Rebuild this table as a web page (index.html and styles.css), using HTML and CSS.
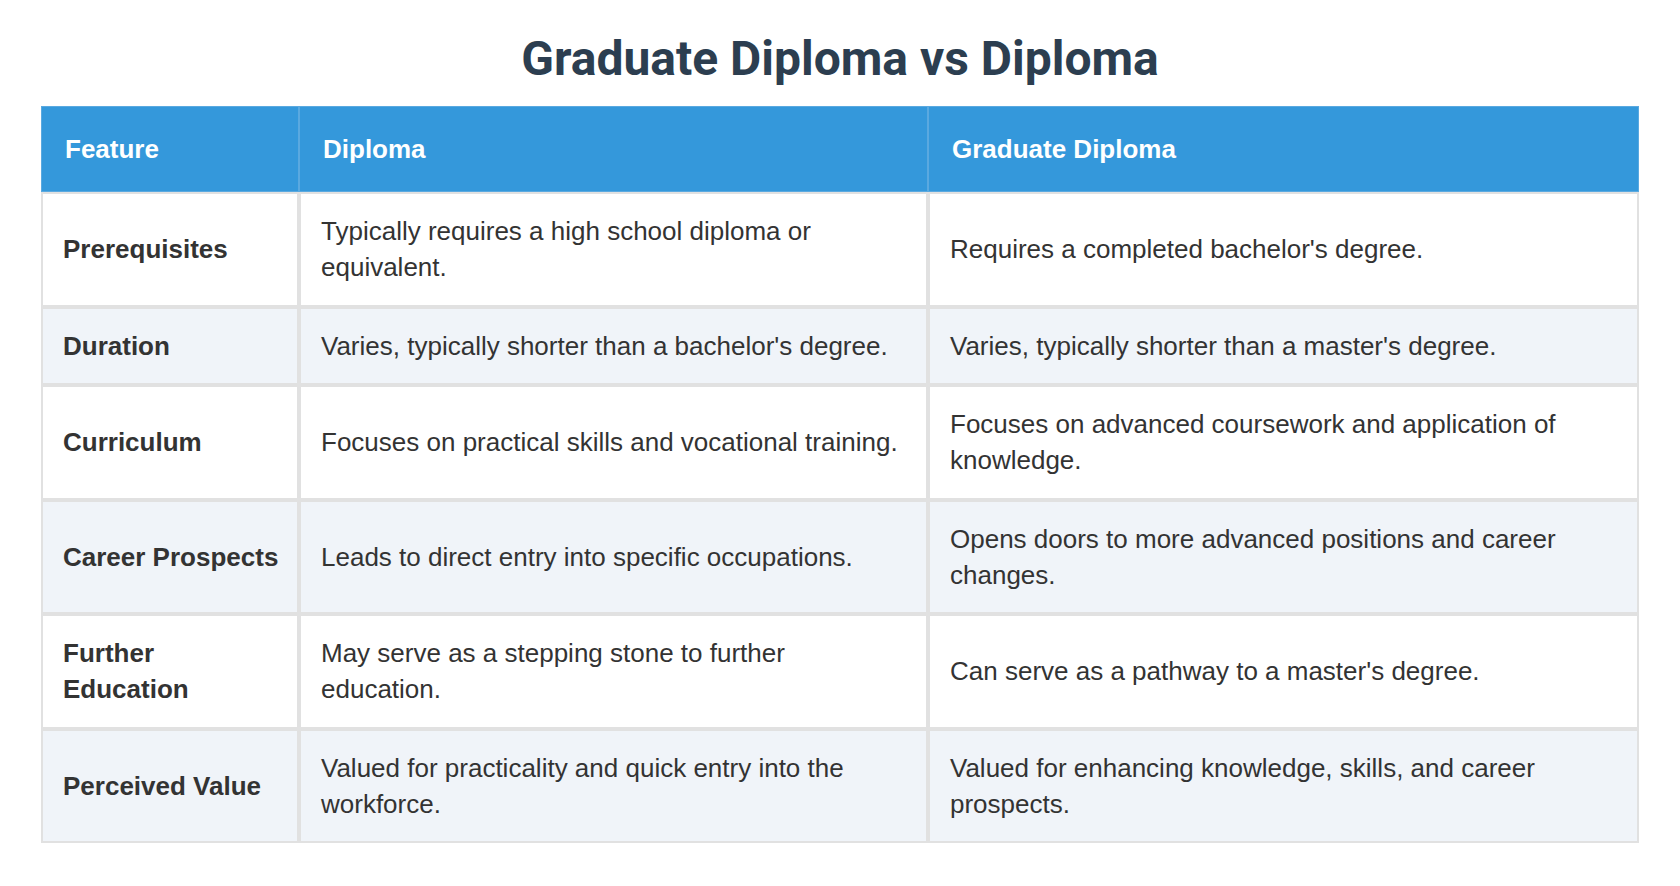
FILE: index.html
```html
<!DOCTYPE html>
<html lang="en">
<head>
<meta charset="utf-8">
<title>Graduate Diploma vs Diploma</title>
<link rel="stylesheet" href="styles.css">
</head>
<body>
<main class="page">
  <h1 class="title">Graduate Diploma vs Diploma</h1>
  <table class="compare">
    <colgroup>
      <col class="c1">
      <col class="c2">
      <col class="c3">
    </colgroup>
    <thead>
      <tr>
        <th>Feature</th>
        <th>Diploma</th>
        <th>Graduate Diploma</th>
      </tr>
    </thead>
    <tbody>
      <tr>
        <td class="feat">Prerequisites</td>
        <td>Typically requires a high school diploma or equivalent.</td>
        <td>Requires a completed bachelor's degree.</td>
      </tr>
      <tr>
        <td class="feat">Duration</td>
        <td>Varies, typically shorter than a bachelor's degree.</td>
        <td>Varies, typically shorter than a master's degree.</td>
      </tr>
      <tr>
        <td class="feat">Curriculum</td>
        <td>Focuses on practical skills and vocational training.</td>
        <td>Focuses on advanced coursework and application of knowledge.</td>
      </tr>
      <tr>
        <td class="feat">Career Prospects</td>
        <td>Leads to direct entry into specific occupations.</td>
        <td>Opens doors to more advanced positions and career changes.</td>
      </tr>
      <tr>
        <td class="feat">Further Education</td>
        <td>May serve as a stepping stone to further education.</td>
        <td>Can serve as a pathway to a master's degree.</td>
      </tr>
      <tr>
        <td class="feat">Perceived Value</td>
        <td>Valued for practicality and quick entry into the workforce.</td>
        <td>Valued for enhancing knowledge, skills, and career prospects.</td>
      </tr>
    </tbody>
  </table>
</main>
</body>
</html>
```

FILE: styles.css
```css
html, body {
  margin: 0;
  padding: 0;
  background: #ffffff;
}

.page {
  padding: 0 41px;
  font-family: "Liberation Sans", Arial, sans-serif;
  color: #333333;
}

.title {
  margin: 32px 0 20px;
  font-family: Roboto, "Liberation Sans", sans-serif;
  font-weight: 700;
  font-size: 48px;
  line-height: 54px;
  text-align: center;
  color: #2c3e50;
}

.compare {
  width: 1598px;
  table-layout: fixed;
  border-collapse: separate;
  border-spacing: 0;
  font-size: 26px;
  line-height: 36px;
}

.c1 { width: 258px; }
.c2 { width: 629px; }
.c3 { width: 711px; }

.compare th {
  background: #3498db;
  color: #ffffff;
  font-weight: 700;
  text-align: left;
  padding: 24px 23px;
  border: 1px solid #5aa9e0;
}

.compare td {
  padding: 19.25px 20px;
  border: 2px solid #e1e1e1;
  vertical-align: middle;
  text-align: left;
  background: #ffffff;
}

.compare tbody tr:nth-child(even) td {
  background: #f0f4f9;
}

.compare td.feat {
  font-weight: 700;
  color: #333333;
  padding-right: 14px;
}
```
